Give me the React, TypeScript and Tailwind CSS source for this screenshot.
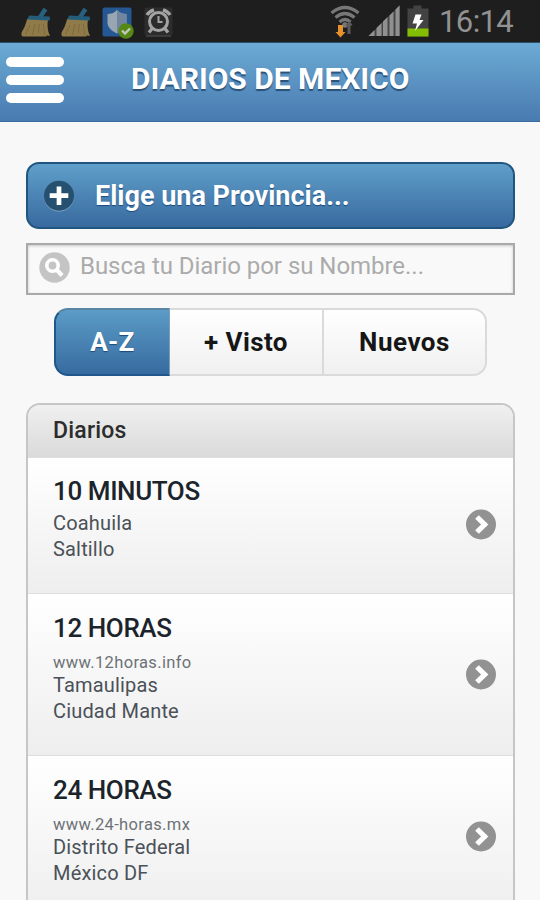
import React from "react";

type Item = { name: string; url?: string; state: string; city: string };

const items: Item[] = [
  { name: "10 MINUTOS", state: "Coahuila", city: "Saltillo" },
  { name: "12 HORAS", url: "www.12horas.info", state: "Tamaulipas", city: "Ciudad Mante" },
  { name: "24 HORAS", url: "www.24-horas.mx", state: "Distrito Federal", city: "México DF" },
];

function Broom() {
  return (
    <svg width="31" height="32" viewBox="0 0 31 32">
      <path d="M7.500 12.500 L28 13.500 C27 19 27.500 25 30 30 L27 29.500 L26 30.500 L2.500 30.500 C0.500 29 1.500 26 3.500 23 C5.500 19.500 6 16 7.500 12.500Z" fill="#8f7a49" />
      <path d="M10 19 L5.500 28 M15 18 L12.500 29 M19 18 L18.500 27 M23.500 18 L24.500 29" stroke="#80693c" strokeWidth="1" fill="none" />
      <path d="M19.500 12 L25.500 3" stroke="#28617f" strokeWidth="4.500" strokeLinejoin="round" />
      <path d="M9 9.500 L29.500 10.500 Q30.500 12.500 29.500 14.500 L7.500 13.500Z" fill="#245d79" />
    </svg>
  );
}

function Shield() {
  return (
    <svg width="33" height="33" viewBox="0 0 33 33">
      <rect x="0.500" y="0.500" width="29" height="29" rx="2" fill="#255792" />
      <path d="M15 3 C12 6 9 7 5.500 7 L5.500 16 C6 21 10 24 15 26.500 C20 24 24 21 24.500 16 L24.500 7 C21 7 18 6 15 3Z" fill="#98a6b4" />
      <path d="M15 3 C18 6 21 7 24.500 7 L24.500 16 C24 21 20 24 15 26.500Z" fill="#71869e" />
      <circle cx="24" cy="24" r="7.700" fill="#568817" />
      <path d="M20 23.500 L23 26.500 L28 21.500" stroke="#c2c9b8" strokeWidth="2.400" fill="none" />
    </svg>
  );
}

function Alarm() {
  return (
    <svg width="29" height="31" viewBox="0 0 29 31">
      <rect x="0.500" y="0.500" width="28" height="28" rx="2" fill="#2c2c2c" />
      <g stroke="#a3a3a3" fill="none">
        <circle cx="14.500" cy="14.500" r="9" strokeWidth="3" />
        <path d="M14.500 9 V15 H18.500" strokeWidth="2" />
        <path d="M3 8 Q5 4.500 10 2.800 M19 2.800 Q24 4.500 26 8" strokeWidth="3.400" />
        <path d="M8.500 21 L5 25.500 M20.500 21 L24 25.500" strokeWidth="3.200" />
      </g>
      <path d="M2 29 H27" stroke="#464646" strokeWidth="1.500" />
    </svg>
  );
}

function Wifi() {
  return (
    <svg width="30" height="34" viewBox="0 0 30 34">
      <g stroke="#777" strokeWidth="3.200" fill="none">
        <path d="M1.500 8 Q15 -3 28.500 8" />
        <path d="M5.500 12.500 Q15 4.500 24.500 12.500" />
        <path d="M9.500 17 Q15 12 20.500 17" />
      </g>
      <circle cx="15" cy="20" r="2.800" fill="#777" />
      <path d="M19.500 16 L22.500 20 L20.500 21 V29 H17.500 V21 L15.500 20Z" fill="#5a5a5a" />
      <path d="M8 20 H13 V27 H15.500 L10.500 32.500 L5.500 27 H8Z" fill="#e8922c" />
    </svg>
  );
}

function Signal() {
  return (
    <svg width="33" height="32" viewBox="0 0 33 32">
      <path d="M0.500 31 L32 0 V31Z" fill="#464646" />
      <path d="M0.500 31 L6.500 25 V31Z M8.500 23 L13.500 18 V31 H8.500Z M15 16.500 L19.500 12 V31 H15Z M21.500 10.500 L25.500 6.500 V31 H21.500Z M27.500 4.500 L31.500 0.500 V31 H27.500Z" fill="#909090" />
    </svg>
  );
}

function Battery() {
  return (
    <svg width="22" height="32" viewBox="0 0 22 32">
      <path d="M6.500 0.500 H14.500 V3.500 H21.500 V31.500 H0.500 V3.500 H6.500Z" fill="#434343" />
      <rect x="0.500" y="23.500" width="21" height="8" fill="#84be00" />
      <path d="M8.500 9.500 L14.500 9.500 L12.500 15 L16.500 15 L8 26 L10 18.500 L5.500 18.500Z" fill="#fff" />
    </svg>
  );
}

function PlusBadge() {
  return (
    <svg width="32" height="32" viewBox="0 0 32 32">
      <circle cx="16" cy="16.700" r="15" fill="#7c9cbc" />
      <circle cx="16" cy="15.700" r="15" fill="#25506f" />
      <path d="M16 6.500 V25 M6.700 15.700 H25.300" stroke="#fff" strokeWidth="4.700" />
    </svg>
  );
}

function SearchBadge() {
  return (
    <svg width="31" height="31" viewBox="0 0 31 31">
      <circle cx="15.500" cy="15.500" r="15.200" fill="#c4c4c4" />
      <circle cx="13.500" cy="13.500" r="5.700" stroke="#fff" strokeWidth="3.600" fill="none" />
      <path d="M17.500 17.500 L23 23.500" stroke="#fff" strokeWidth="4.200" />
    </svg>
  );
}

function Arrow() {
  return (
    <svg width="30" height="31" viewBox="0 0 30 31">
      <circle cx="15" cy="15.500" r="15" fill="#929292" />
      <path d="M11 8 L18.700 15.500 L11 23" stroke="#fff" strokeWidth="5.200" fill="none" />
    </svg>
  );
}

export default function App() {
  return (
    <div className="flex h-[900px] w-[540px] flex-col overflow-hidden bg-[#f8f8f8] font-['Roboto','Liberation_Sans',sans-serif] whitespace-nowrap">
      <div className="flex h-[42px] shrink-0 items-start bg-[#1f1e1e]">
        <div className="flex items-start pt-[6px] pl-5">
          <Broom />
          <div className="ml-[9px]"><Broom /></div>
          <div className="mt-px ml-[11px]"><Shield /></div>
          <div className="mt-px ml-[9px]"><Alarm /></div>
        </div>
        <div className="ml-auto flex items-start pt-[5px]">
          <Wifi />
          <div className="ml-2"><Signal /></div>
          <div className="ml-[6px]"><Battery /></div>
          <div className="ml-[10px] w-[101px] text-[31px] leading-[34px] tracking-[-0.6px] text-[#929292]">16:14</div>
        </div>
      </div>

      <header className="flex h-20 shrink-0 items-start border-t border-b border-t-[#2d5068] border-b-[#396b9e] bg-linear-to-b from-[#6cabd5] to-[#497bb0]">
        <div className="mt-[14px] ml-[6px] flex w-[58px] flex-col gap-[8px]">
          <div className="h-[10px] rounded-full bg-white" />
          <div className="h-[10px] rounded-full bg-white" />
          <div className="h-[10px] rounded-full bg-white" />
        </div>
        <h1 className="mt-[18px] ml-[67px] text-[30px] leading-[36px] font-bold text-white [text-shadow:0_2px_1px_#2a5078]">DIARIOS DE MEXICO</h1>
      </header>

      <main className="flex flex-col px-[26px] pt-10">
        <button className="flex h-[67px] w-[489px] shrink-0 items-center rounded-[13px] border-2 border-[#1f557f] bg-linear-to-b from-[#5f9fca] to-[#396a9f] pl-[15px] text-left">
          <PlusBadge />
          <span className="ml-5 text-[27px] leading-8 font-bold text-white [text-shadow:0_1px_1px_#194b7e]">Elige una Provincia...</span>
        </button>

        <div className="mt-[14px] flex h-[52px] w-[489px] shrink-0 items-center border-2 border-[#a9a9a9] bg-[#f9f9f9] pb-[3px] pl-[11px] shadow-[inset_0_1px_3px_rgba(0,0,0,0.2)]">
          <SearchBadge />
          <span className="mb-[3px] ml-[10px] text-[24px] leading-7 tracking-[-0.04px] text-[#ababab]">Busca tu Diario por su Nombre...</span>
        </div>

        <div className="mt-[13px] ml-[28px] flex h-[68px] w-[433px] shrink-0 text-[26px] font-bold text-[#161616]">
          <div className="flex w-[116px] shrink-0 items-center justify-center rounded-l-[14px] border-2 border-r border-[#1f568c] border-t-[#5a86a6] border-r-[#7f9dba] bg-linear-to-b from-[#5c9cc7] to-[#376b9f] tracking-[0.3px] text-white [text-shadow:0_1px_1px_#194b7e]">A-Z</div>
          <div className="flex w-[154px] shrink-0 items-center justify-center border-y-2 border-r-2 border-[#dadada] bg-linear-to-b from-white to-[#f0f0f0] tracking-[0.4px]">+ Visto</div>
          <div className="flex flex-1 items-center justify-center rounded-r-[14px] border-2 border-l-0 border-[#dadada] bg-linear-to-b from-white to-[#f0f0f0] tracking-[0.5px]">Nuevos</div>
        </div>

        <section className="mt-[27px] flex h-[540px] w-[489px] shrink-0 flex-col overflow-hidden rounded-t-[14px] border-2 border-[#c6c6c6]">
          <h2 className="flex h-[52px] shrink-0 items-center bg-linear-to-b from-[#f0f0f0] to-[#dadada] pl-[25px] text-[23px] font-medium tracking-[0.2px] text-[#2c2c2c]">Diarios</h2>
          {items.map((it) => (
            <article
              key={it.name}
              className={`flex shrink-0 items-center justify-between border-t border-[#dedede] bg-linear-to-b from-white to-[#eee] pr-[17px] pl-[25px] ${it.url ? "h-[162px]" : "h-[136px] pb-[2px]"}`}
            >
              <div className={`flex h-full flex-col text-[20px] leading-[26px] tracking-[0.17px] text-[#4a5158] ${it.url ? "pt-[18px]" : "pt-[17px]"}`}>
                <h3 className="mb-[3px] text-[26px] leading-[32px] font-medium tracking-[-0.4px] text-[#1b242b]">{it.name}</h3>
                {it.url && <p className="mt-[5px] -mb-[2px] text-[16.5px] leading-[22px] tracking-[0.35px] text-[#6d7276]">{it.url}</p>}
                <p>{it.state}</p>
                <p>{it.city}</p>
              </div>
              <Arrow />
            </article>
          ))}
        </section>
      </main>
    </div>
  );
}
